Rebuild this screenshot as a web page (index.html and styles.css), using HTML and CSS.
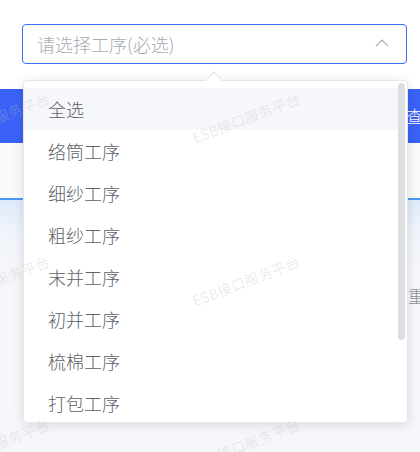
FILE: index.html
```html
<!DOCTYPE html>
<html lang="zh">
<head>
<meta charset="utf-8">
<link rel="stylesheet" href="styles.css">
</head>
<body>
<div class="page">
  <div class="top">
    <div class="select">
      <div class="input">
        <span class="placeholder">请选择工序(必选)</span>
        <svg class="chev" width="14" height="8" viewBox="0 0 14 8"><path d="M1 7.2 L7 1.2 L13 7.2" fill="none" stroke="#a8abb2" stroke-width="1.2"/></svg>
      </div>
      <div class="dropdown">
        <div class="arrow"></div>
        <div class="panel">
          <ul class="list">
            <li class="item hover">全选</li>
            <li class="item">络筒工序</li>
            <li class="item">细纱工序</li>
            <li class="item">粗纱工序</li>
            <li class="item">末并工序</li>
            <li class="item">初并工序</li>
            <li class="item">梳棉工序</li>
            <li class="item">打包工序</li>
          </ul>
          <div class="track"><div class="thumb"></div></div>
        </div>
      </div>
    </div>
  </div>
  <div class="bar"><span class="bar-text">查询</span></div>
  <div class="band"></div>
  <div class="content"><span class="reset">重置</span></div>
</div>
<div class="watermarks">
  <span class="wm" style="left:-57px;top:128px">ESB接口服务平台</span>
  <span class="wm" style="left:193px;top:128px">ESB接口服务平台</span>
  <span class="wm" style="left:-57px;top:291px">ESB接口服务平台</span>
  <span class="wm" style="left:193px;top:291px">ESB接口服务平台</span>
  <span class="wm" style="left:-57px;top:454px">ESB接口服务平台</span>
  <span class="wm" style="left:193px;top:454px">ESB接口服务平台</span>
</div>
</body>
</html>
```
FILE: styles.css
```css
* { box-sizing: border-box; }
html, body { margin: 0; padding: 0; }
body {
  width: 420px;
  height: 452px;
  overflow: hidden;
  background: #fff;
  font-family: "Noto Sans CJK SC", "Noto Sans", sans-serif;
  font-weight: 300;
  position: relative;
}
.page { display: flex; flex-direction: column; height: 452px; }
.top { height: 89px; padding: 24px 0 0 22px; background: #fff; position: relative; z-index: 5; }
.select { position: relative; width: 385px; }
.input {
  height: 40px;
  border: 1px solid #3e6cf6;
  border-radius: 4px;
  display: flex;
  align-items: center;
  justify-content: space-between;
  padding: 0 17px 0 14px;
  background: #fff;
}
.placeholder { font-size: 18px; color: #a8abb2; line-height: 24px; }
.chev { display: block; margin-top: -2px; }
.dropdown { position: absolute; left: 1px; top: 56px; width: 385px; z-index: 10; }
.arrow {
  position: absolute;
  left: 185px;
  top: -6px;
  width: 12px;
  height: 12px;
  background: #fff;
  border-top: 1px solid #e4e7ed;
  border-left: 1px solid #e4e7ed;
  transform: rotate(45deg);
  z-index: 2;
}
.panel {
  height: 343px;
  background: #fff;
  border: 1px solid #e4e7ed;
  border-radius: 4px;
  box-shadow: 0 2px 12px rgba(0,0,0,0.12);
  overflow: hidden;
  display: flex;
}
.list { list-style: none; margin: 0; padding: 7px 0 0; flex: 1; }
.item {
  height: 42px;
  line-height: 42px;
  padding-left: 24px;
  font-size: 18px;
  color: #606266;
  white-space: nowrap;
}
.item.hover { background: #f5f7fa; }
.track { width: 9px; padding: 2px 2px 0 0; flex: none; }
.thumb { width: 7px; height: 257px; background: #dddee1; border-radius: 4px; }
.bar {
  height: 54px;
  background: #3b62f6;
  display: flex;
  align-items: center;
  padding-left: 406px;
  overflow: hidden;
  white-space: nowrap;
}
.bar-text { color: #fff; font-size: 17px; margin-top: -2px; }
.band { height: 57px; background: #fafafa; border-bottom: 2px solid #4a9af5; }
.content {
  flex: 1;
  background: linear-gradient(to bottom, #dfeafa 0, #eff4fb 30px, #f6f7fa 70px);
  padding: 83px 0 0 408px;
  overflow: hidden;
  white-space: nowrap;
}
.reset { font-size: 17px; color: #909399; }
.watermarks { position: absolute; inset: 0; pointer-events: none; z-index: 50; overflow: hidden; }
.wm {
  position: absolute;
  font-size: 14px;
  line-height: 20px;
  letter-spacing: 0.5px;
  color: rgba(190,190,190,0.42);
  white-space: nowrap;
  transform-origin: 0 50%;
  transform: rotate(-21deg);
}
```
